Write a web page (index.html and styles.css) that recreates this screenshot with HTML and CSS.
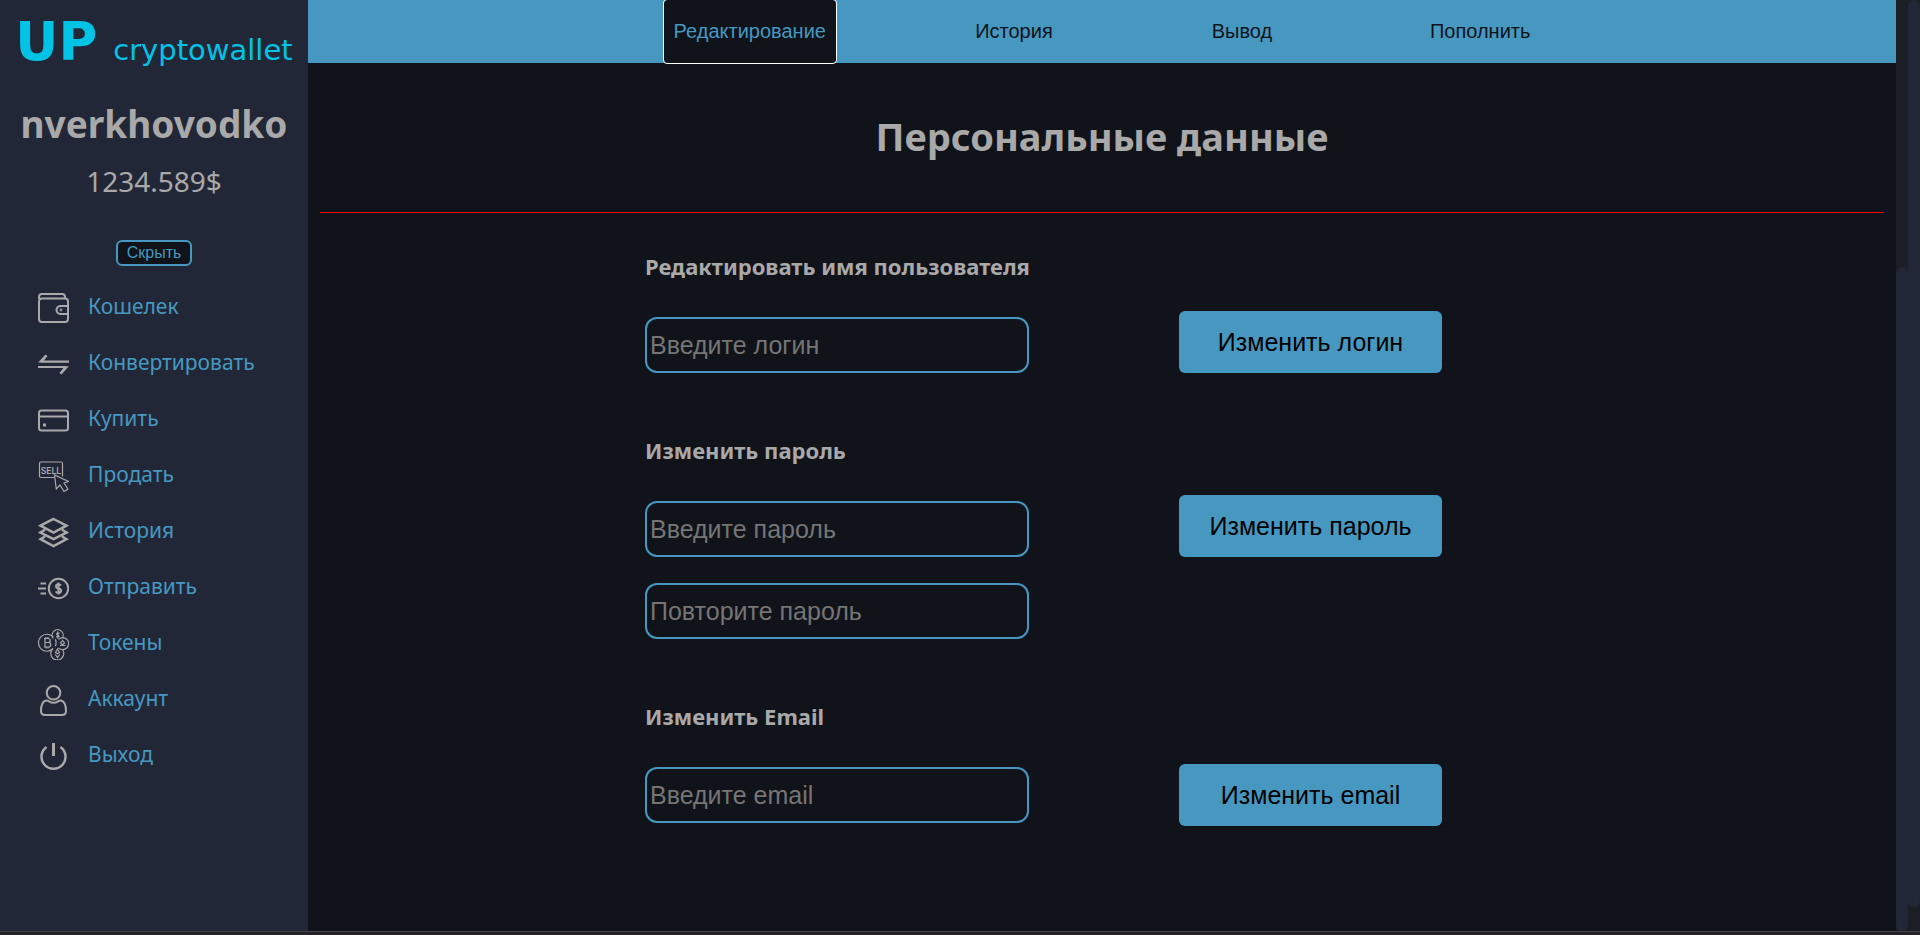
FILE: index.html
```html
<!DOCTYPE html>
<html lang="ru">
<head>
<meta charset="utf-8">
<title>UP cryptowallet</title>
<link rel="stylesheet" href="styles.css">
</head>
<body>
<div class="app">
  <aside class="sidebar">
    <a class="logo" href="#"><span class="logo-mark">UP</span><span class="logo-name">cryptowallet</span></a>
    <h2 class="user-name">nverkhovodko</h2>
    <p class="balance">1234.589$</p>
    <button class="hide-button" type="button">Скрыть</button>
    <nav class="menu">
      <a class="menu-link" href="#">
        <svg class="icon" viewBox="0 0 31 31"><rect x="1" y="5.500" width="29" height="23.500" rx="3"/><path d="M1 6V4a3 3 0 0 1 3-3h20a3 3 0 0 1 3 3v1.500M30 13h-7.500a4 4 0 0 0 0 8H30"/><circle cx="23" cy="17" r=".4"/></svg>
        Кошелек
      </a>
      <a class="menu-link" href="#">
        <svg class="icon" viewBox="0 0 31 31"><path stroke-width="2.200" d="M31 12.600H3M0 18h28"/><path stroke="none" fill="currentColor" d="M0 13.600 7.500 5.500l2 1.500-5 6.500zM31 17l-7.500 8.500-2-1.500 5-6.500z"/></svg>
        Конвертировать
      </a>
      <a class="menu-link" href="#">
        <svg class="icon" viewBox="0 0 31 31"><rect x="1" y="5.500" width="29" height="20" rx="2.500"/><path d="M1 11.500h29"/><rect x="5.500" y="19" width="2" height="2" fill="currentColor" stroke-width="1"/></svg>
        Купить
      </a>
      <a class="menu-link" href="#">
        <svg class="icon icon-thin" viewBox="0 0 31 31"><path d="M16 16.500H3A1.500 1.500 0 0 1 1.500 15V2.500A1.500 1.500 0 0 1 3 1h20a1.500 1.500 0 0 1 1.500 1.500v13M16.500 14l1.800 14 3.700-4 4 6.500 4-2.500-4-6 4.500-1.500z"/><text class="icon-text" x="13" y="12.500">SELL</text></svg>
        Продать
      </a>
      <a class="menu-link" href="#">
        <svg class="icon icon-bold" viewBox="0 0 31 31"><path d="M15.500 2 28.500 8.700 15.500 15.500 2.500 8.700zM7 12.800l-4.500 2.700 13 6.500 13-6.500-4.500-2.700M7 19.500l-4.500 2.700 13 6.800 13-6.800-4.500-2.700"/></svg>
        История
      </a>
      <a class="menu-link" href="#">
        <svg class="icon" viewBox="0 0 31 31"><circle cx="20.500" cy="15.500" r="9.700"/><path d="M2.500 10.500H8M0 15.500h8M2.500 20.500H8M23 12.500c-.6-1-1.500-1.300-2.500-1.300-3.300 0-3.300 4 0 4.300 3.500.3 3.500 4.500 0 4.500-1.200 0-2.200-.5-2.700-1.600M20.500 9.500v12"/></svg>
        Отправить
      </a>
      <a class="menu-link" href="#">
        <svg class="icon icon-thin" viewBox="0 0 31 31"><path d="M15.200 8a8.500 8.500 0 1 0 0 11.500M17.300 10.300a8.500 8.500 0 0 1 0 7M15.300 9.500a5.500 5.500 0 1 1 8.700 0M20.500 10.300a6 6 0 1 1 0 8.500M24.600 20.700a6.500 6.500 0 1 1-9.500-1.200M7 9.500v8.500M6 9.500h4c3 0 3 4 0 4H7h3.500c3 0 3 4.500 0 4.500H6M8 8v1.500M10 8v1.500M8 18v1.500M10 18v1.500M21.500 4.500c-2-1.500-4 .8-1.800 1.500s1.200 3-1.500 1.500M19.700 2.500v7M19.500 20l-2 3.500 2 1.200 2-1.200zM17.300 25.500l2.200 3 2.200-3M22 16.500h5.500M24.500 11.500l-2 2.500 2 2 2-2z"/></svg>
        Токены
      </a>
      <a class="menu-link" href="#">
        <svg class="icon" viewBox="0 0 31 31"><circle cx="15.500" cy="7.800" r="6.800"/><path d="M8 15.500c-3 .8-5 5-5 10.500 0 3 1.500 4 4 4h17c2.500 0 4-1 4-4 0-5.500-2-9.700-5-10.500-1-.3-2 .3-3 .9-3 1.800-6 1.800-9 0-1-.6-2-1.200-3-.9z"/></svg>
        Аккаунт
      </a>
      <a class="menu-link" href="#">
        <svg class="icon icon-bold" viewBox="0 0 31 31"><path d="M8.500 6a12 12 0 1 0 14 0"/><path stroke-width="3" d="M15.500 2v13"/></svg>
        Выход
      </a>
    </nav>
  </aside>
  <main class="content">
    <nav class="tabs">
      <button class="tab tab-active" type="button">Редактирование</button>
      <button class="tab" type="button">История</button>
      <button class="tab" type="button">Вывод</button>
      <button class="tab" type="button">Пополнить</button>
    </nav>
    <h1 class="title">Персональные данные</h1>
    <hr class="divider">
    <div class="forms">
      <form>
        <h3 class="form-title">Редактировать имя пользователя</h3>
        <div class="form-row">
          <div class="fields"><input class="field" type="text" placeholder="Введите логин" aria-label="Введите логин"></div>
          <button class="submit" type="button">Изменить логин</button>
        </div>
      </form>
      <form>
        <h3 class="form-title">Изменить пароль</h3>
        <div class="form-row">
          <div class="fields">
            <input class="field" type="password" placeholder="Введите пароль" aria-label="Введите пароль">
            <input class="field" type="password" placeholder="Повторите пароль" aria-label="Повторите пароль">
          </div>
          <button class="submit" type="button">Изменить пароль</button>
        </div>
      </form>
      <form>
        <h3 class="form-title">Изменить Email</h3>
        <div class="form-row form-row-centered">
          <input class="field" type="email" placeholder="Введите email" aria-label="Введите email">
          <button class="submit" type="button">Изменить email</button>
        </div>
      </form>
    </div>
  </main>
  <div class="scrollbar scrollbar-inner"><div class="thumb"></div></div>
  <div class="scrollbar scrollbar-outer"><div class="thumb"></div></div>
</div>
<footer class="bottom-edge"></footer>
</body>
</html>
```

FILE: styles.css
```css
* {
  box-sizing: border-box;
}

body {
  display: flex;
  flex-direction: column;
  min-height: 100vh;
  margin: 0;
  background: #10131a;
  color: #a9a9a9;
  font-family: "Noto Sans", "Open Sans", sans-serif;
}

button,
input {
  font-family: "Liberation Sans", Arial, sans-serif;
}

.app {
  display: flex;
  flex: 1;
}

.sidebar {
  display: flex;
  flex-direction: column;
  align-items: center;
  flex: 0 0 308px;
  background: #222738;
}

.logo {
  display: flex;
  align-items: baseline;
  gap: 16px;
  height: 72px;
  margin-top: 12px;
  color: #00c3e6;
  font-family: "DejaVu Sans", sans-serif;
  line-height: 60px;
  text-decoration: none;
}

.logo-mark {
  font-size: 53px;
  font-weight: 700;
}

.logo-name {
  font-size: 29px;
}

.user-name {
  margin: 13px 0 0;
  font-size: 37px;
  line-height: 54px;
}

.balance {
  margin: 10px 0 0;
  font-size: 28px;
  line-height: 40px;
}

.hide-button {
  height: 26px;
  margin-top: 39px;
  padding: 0 9px;
  border: 2px solid #4698c1;
  border-radius: 6px;
  background: #10131a;
  color: #4698c1;
  font-size: 16px;
  line-height: 20px;
}

.menu {
  align-self: stretch;
  padding: 12px 0 0 38px;
}

.menu-link {
  display: flex;
  align-items: center;
  gap: 19px;
  height: 56px;
  color: #4698c1;
  font-size: 21px;
  text-decoration: none;
}

.icon {
  width: 31px;
  height: 31px;
  margin-top: 4px;
  color: #a9a9a9;
  fill: none;
  stroke: currentColor;
  stroke-width: 2;
}

.icon-thin {
  stroke-width: 1.200;
}

.icon-bold {
  stroke-width: 2.500;
}

.icon-text {
  fill: currentColor;
  stroke: none;
  font-family: Roboto, "Liberation Sans", sans-serif;
  font-size: 9px;
  font-weight: 500;
  text-anchor: middle;
}

.content {
  flex: 1;
}

.tabs {
  display: flex;
  justify-content: center;
  gap: 128px;
  background: #4698c1;
}

.tab {
  min-width: 100px;
  height: 63px;
  padding: 0 10px;
  border: 0;
  background: transparent;
  color: #10131a;
  font-size: 20px;
}

.tab-active {
  border-radius: 3px;
  outline: 1px solid #fff;
  background: #10131a;
  color: #4698c1;
}

.title {
  margin: 46px 0 49px;
  font-size: 38px;
  line-height: 54px;
  text-align: center;
}

.divider {
  height: 1px;
  margin: 0 12px;
  border: 0;
  background: #f00;
}

.forms {
  display: flex;
  flex-direction: column;
  gap: 62px;
  max-width: 914px;
  margin: 0 auto;
  padding: 38px 0;
}

.form-title {
  margin: 0;
  font-size: 22px;
  line-height: 30px;
}

.form-row {
  display: grid;
  grid-template-columns: 384px 263px;
  align-items: start;
  column-gap: 150px;
  margin-top: 30px;
}

.form-row-centered {
  align-items: center;
  margin-top: 33px;
}

.fields {
  display: grid;
  gap: 26px;
  padding-top: 6px;
}

.field {
  width: 100%;
  height: 56px;
  padding: 1px 3px;
  border: 2px solid #4698c1;
  border-radius: 12px;
  background: transparent;
  color: #a9a9a9;
  font-size: 25px;
}

.field::placeholder {
  color: #757575;
}

.submit {
  height: 62px;
  border: 0;
  border-radius: 6px;
  background: #4698c1;
  color: #000;
  font-size: 25px;
}

.scrollbar {
  display: flex;
  flex: 0 0 12px;
  background: #1c1e26;
}

.thumb {
  flex: 1;
  border-radius: 6px;
  background: #222738;
}

.scrollbar-inner {
  padding-top: 267px;
}

.scrollbar-outer {
  padding-bottom: 24px;
}

.bottom-edge {
  height: 4px;
  border-top: 1px solid #424248;
  background: #242226;
}
```
